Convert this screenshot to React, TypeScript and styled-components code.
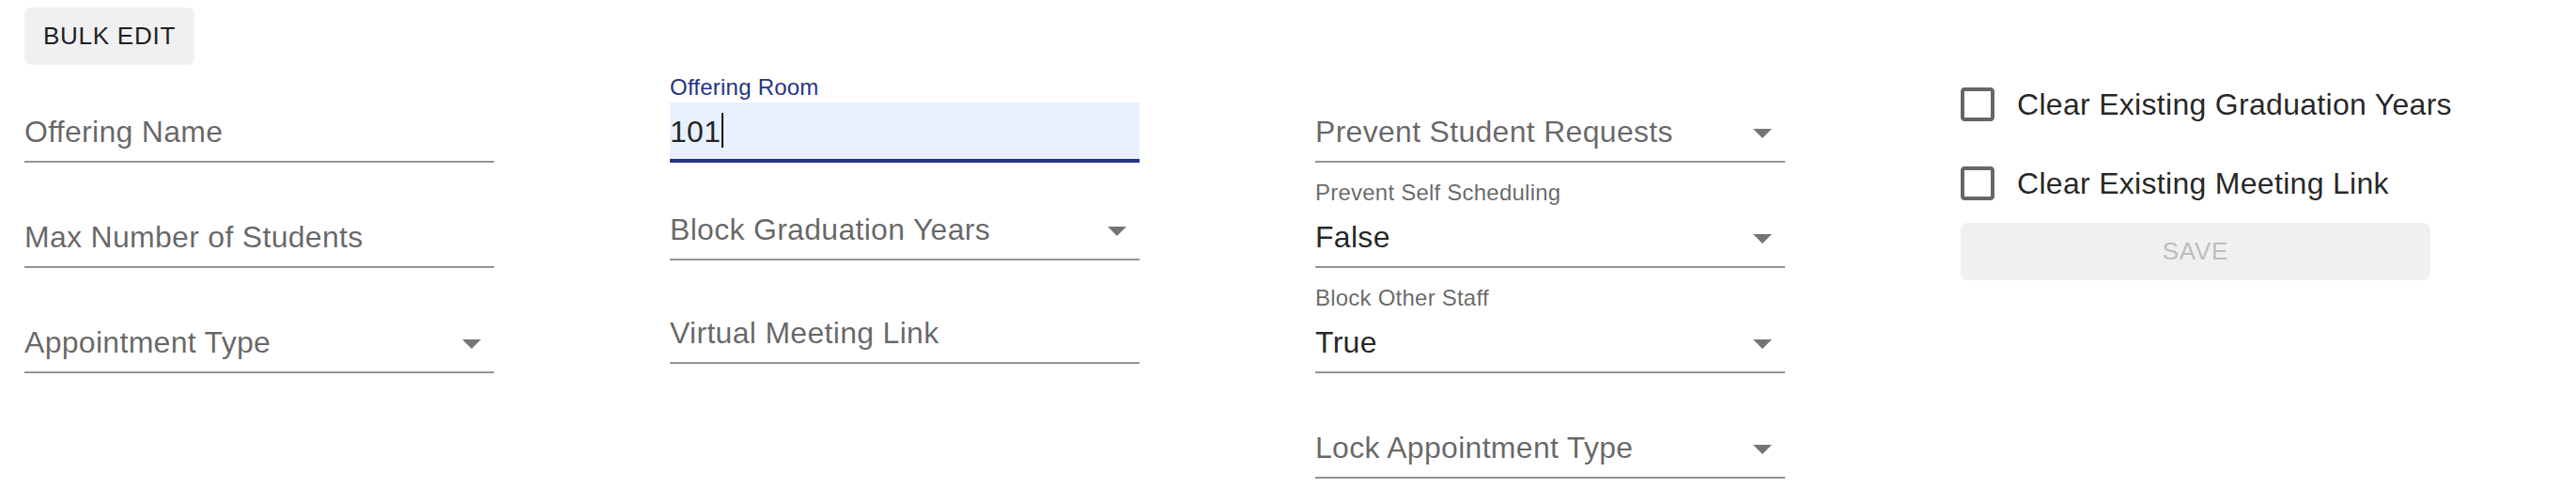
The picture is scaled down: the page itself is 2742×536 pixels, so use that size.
import React from 'react'
import styled, { createGlobalStyle, css } from 'styled-components'

const GlobalStyle = createGlobalStyle`
  html, body {
    margin: 0;
    padding: 0;
    background: #ffffff;
  }
  body {
    font-family: 'Liberation Sans', Arial, Helvetica, sans-serif;
    color: rgba(0, 0, 0, 0.87);
  }
`

const FOCUS = '#263480'

const Page = styled.div`
  padding: 8px 0 0 26px;
  width: 2742px;
  height: 536px;
  box-sizing: border-box;
`

const GreyButton = styled.button<{ $block?: boolean; $disabled?: boolean }>`
  display: inline-flex;
  align-items: center;
  justify-content: center;
  box-sizing: border-box;
  height: 61px;
  padding: 0 20px;
  border: none;
  border-radius: 8px;
  background: #f0f0f0;
  font-family: 'Liberation Sans', Arial, Helvetica, sans-serif;
  font-size: 26px;
  font-weight: 400;
  letter-spacing: 0.02857em;
  text-transform: uppercase;
  line-height: 1.75;
  color: #1d1f27;
  cursor: pointer;
  ${({ $block }) => $block && css`width: 100%;`}
  ${({ $disabled }) => $disabled && css`color: #bdbdbd; cursor: default;`}
`

const FormGrid = styled.div`
  display: grid;
  grid-template-columns: repeat(4, 687px);
  align-items: start;
`

const Column = styled.div`
  display: flex;
  flex-direction: column;
  width: 500px;
`

const FieldRoot = styled.div<{ $mt: number }>`
  position: relative;
  width: 500px;
  height: 96px;
  margin-top: ${({ $mt }) => $mt}px;
`

const FloatingLabel = styled.label<{ $shrink?: boolean; $focused?: boolean }>`
  position: absolute;
  left: 0;
  white-space: nowrap;
  letter-spacing: 0.00938em;
  color: ${({ $focused }) => ($focused ? FOCUS : 'rgba(0, 0, 0, 0.6)')};
  ${({ $shrink }) =>
    $shrink
      ? css`
          top: -1px;
          font-size: 24px;
          line-height: 34.5px;
        `
      : css`
          top: 40px;
          font-size: 32px;
          line-height: 46px;
        `}
`

const InputBox = styled.div<{ $focused?: boolean; $autofill?: boolean }>`
  position: relative;
  box-sizing: border-box;
  margin-top: 32px;
  height: 64px;
  padding: 8px 48px 10px 0;
  font-size: 32px;
  line-height: 46px;
  letter-spacing: 0.00938em;
  color: rgba(0, 0, 0, 0.87);
  background: ${({ $autofill }) => ($autofill ? '#e8f0fe' : 'transparent')};
  &::before {
    content: '';
    position: absolute;
    left: 0;
    right: 0;
    bottom: 0;
    border-bottom: 2px solid rgba(0, 0, 0, 0.42);
  }
  ${({ $focused }) =>
    $focused &&
    css`
      &::after {
        content: '';
        position: absolute;
        left: 0;
        right: 0;
        bottom: 0;
        border-bottom: 4px solid ${FOCUS};
      }
    `}
`

const Caret = styled.span`
  display: inline-block;
  width: 2px;
  height: 37px;
  margin-left: 1px;
  background: #000;
  vertical-align: -6px;
`

const ArrowIcon = styled.svg`
  position: absolute;
  right: 0;
  top: 8px;
  width: 48px;
  height: 48px;
  fill: rgba(0, 0, 0, 0.54);
`

const CheckRow = styled.label`
  display: flex;
  align-items: center;
  height: 84px;
  margin-left: -24px;
  cursor: pointer;
`

const CheckBoxWrap = styled.span`
  display: inline-flex;
  padding: 18px;
  color: rgba(0, 0, 0, 0.6);
`

const CheckText = styled.span`
  font-size: 32px;
  line-height: 48px;
  letter-spacing: 0.00938em;
  color: rgba(0, 0, 0, 0.87);
  white-space: nowrap;
`

type FieldDef = {
  label: string
  mt: number
  select?: boolean
  value?: string
  focused?: boolean
}

function Field({ label, mt, select, value, focused }: FieldDef) {
  const shrink = !!value || focused
  return (
    <FieldRoot $mt={mt}>
      <FloatingLabel $shrink={shrink} $focused={focused}>
        {label}
      </FloatingLabel>
      <InputBox $focused={focused} $autofill={focused}>
        {value}
        {focused && <Caret />}
        {select && (
          <ArrowIcon viewBox="0 0 24 24">
            <path d="M7 10l5 5 5-5z" />
          </ArrowIcon>
        )}
      </InputBox>
    </FieldRoot>
  )
}

function CheckOption({ label }: { label: string }) {
  return (
    <CheckRow>
      <CheckBoxWrap>
        <svg width="48" height="48" viewBox="0 0 24 24" fill="currentColor">
          <path d="M19 5v14H5V5h14m0-2H5c-1.11 0-2 .9-2 2v14c0 1.1.89 2 2 2h14c1.1 0 2-.9 2-2V5c0-1.1-.9-2-2-2z" />
        </svg>
      </CheckBoxWrap>
      <CheckText>{label}</CheckText>
    </CheckRow>
  )
}

const columns: FieldDef[][] = [
  [
    { label: 'Offering Name', mt: 8 },
    { label: 'Max Number of Students', mt: 16 },
    { label: 'Appointment Type', mt: 16, select: true },
  ],
  [
    { label: 'Offering Room', mt: 8, value: '101', focused: true },
    { label: 'Block Graduation Years', mt: 8, select: true },
    { label: 'Virtual Meeting Link', mt: 14 },
  ],
  [
    { label: 'Prevent Student Requests', mt: 8, select: true },
    { label: 'Prevent Self Scheduling', mt: 16, select: true, value: 'False' },
    { label: 'Block Other Staff', mt: 16, select: true, value: 'True' },
    { label: 'Lock Appointment Type', mt: 16, select: true },
  ],
]

export default function App() {
  return (
    <>
      <GlobalStyle />
      <Page>
        <GreyButton>Bulk Edit</GreyButton>
        <FormGrid>
          {columns.map((fields, i) => (
            <Column key={i}>
              {fields.map((f) => (
                <Field key={f.label} {...f} />
              ))}
            </Column>
          ))}
          <Column>
            <CheckOption label="Clear Existing Graduation Years" />
            <CheckOption label="Clear Existing Meeting Link" />
            <GreyButton $block $disabled>
              Save
            </GreyButton>
          </Column>
        </FormGrid>
      </Page>
    </>
  )
}
